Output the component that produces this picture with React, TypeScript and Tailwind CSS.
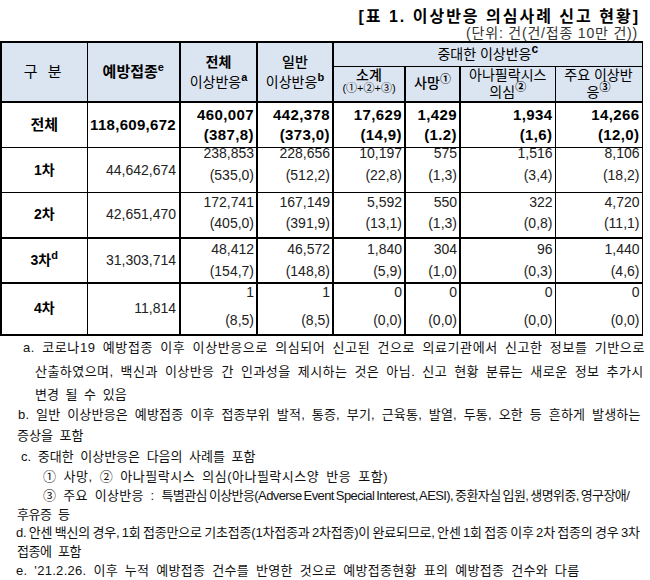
import React from "react";

type Row = {
  label: string;
  sup?: string;
  dose: string;
  bold?: boolean;
  h: string;
  wrap: string;
  cells: [string, string][];
  bottom: string;
};

const ROWS: Row[] = [
  {
    label: "전체",
    dose: "118,609,672",
    bold: true,
    h: "h-[46px]",
    wrap: "leading-[20px]",
    bottom: "border-b",
    cells: [
      ["460,007", "(387,8)"],
      ["442,378", "(373,0)"],
      ["17,629", "(14,9)"],
      ["1,429", "(1.2)"],
      ["1,934", "(1,6)"],
      ["14,266", "(12,0)"],
    ],
  },
  {
    label: "1차",
    dose: "44,642,674",
    h: "h-[45px]",
    wrap: "leading-[22px] -mt-[6px]",
    bottom: "border-b",
    cells: [
      ["238,853", "(535,0)"],
      ["228,656", "(512,2)"],
      ["10,197", "(22,8)"],
      ["575", "(1,3)"],
      ["1,516", "(3,4)"],
      ["8,106", "(18,2)"],
    ],
  },
  {
    label: "2차",
    dose: "42,651,470",
    h: "h-[45px]",
    wrap: "leading-[21px] -mt-[1px]",
    bottom: "border-b-2",
    cells: [
      ["172,741", "(405,0)"],
      ["167,149", "(391,9)"],
      ["5,592", "(13,1)"],
      ["550", "(1,3)"],
      ["322", "(0,8)"],
      ["4,720", "(11,1)"],
    ],
  },
  {
    label: "3차",
    sup: "d",
    dose: "31,303,714",
    h: "h-[45px]",
    wrap: "leading-[22px] -mt-[1px]",
    bottom: "border-b-2",
    cells: [
      ["48,412", "(154,7)"],
      ["46,572", "(148,8)"],
      ["1,840", "(5,9)"],
      ["304", "(1,0)"],
      ["96", "(0,3)"],
      ["1,440", "(4,6)"],
    ],
  },
  {
    label: "4차",
    dose: "11,814",
    h: "h-[46px]",
    wrap: "leading-[28px] -mt-[6px]",
    bottom: "border-b-2",
    cells: [
      ["1", "(8,5)"],
      ["1", "(8,5)"],
      ["0", "(0,0)"],
      ["0", "(0,0)"],
      ["0", "(0,0)"],
      ["0", "(0,0)"],
    ],
  },
];

// right border of data columns 3..8
const COL_R = [
  "border-r-2",
  "border-r-2",
  "border-r-2",
  "border-r-2",
  "border-r",
  "border-r",
];

const NOTES: { text: React.ReactNode; cls: string }[] = [
  { text: "a. 코로나19 예방접종 이후 이상반응으로 의심되어 신고된 건으로 의료기관에서 신고한 정보를 기반으로", cls: "pl-[23px] leading-[24px] tracking-[0.6px]" },
  { text: "산출하였으며, 백신과 이상반응 간 인과성을 제시하는 것은 아님. 신고 현황 분류는 새로운 정보 추가시", cls: "pl-[35px] leading-[24px] tracking-[0.45px]" },
  { text: "변경 될 수 있음", cls: "pl-[35px] leading-[21px]" },
  { text: "b. 일반 이상반응은 예방접종 이후 접종부위 발적, 통증, 부기, 근육통, 발열, 두통, 오한 등 흔하게 발생하는", cls: "pl-[18px] leading-[20px] tracking-[0.2px]" },
  { text: "증상을 포함", cls: "pl-[17px] leading-[22px]" },
  { text: "c. 중대한 이상반응은 다음의 사례를 포함", cls: "pl-[21px] leading-[20px]" },
  { text: "① 사망, ② 아나필락시스 의심(아나필락시스양 반응 포함)", cls: "pl-[43px] leading-[19px] tracking-[0.5px]" },
  {
    text: (
      <>
        ③ 주요 이상반응 :{" "}
        <span className="tracking-[-0.6px] [word-spacing:-1px]">
          특별관심 이상반응(Adverse Event Special Interest, AESI), 중환자실 입원, 생명위중, 영구장애/
        </span>
      </>
    ),
    cls: "pl-[43px] leading-[20px] tracking-[0.3px]",
  },
  { text: "후유증 등", cls: "pl-[17px] leading-[18px] tracking-[-0.4px]" },
  {
    text: "d. 안센 백신의 경우, 1회 접종만으로 기초접종(1차접종과 2차접종)이 완료되므로, 안센 1회 접종 이후 2차 접종의 경우 3차",
    cls: "pl-[16px] leading-[18px] tracking-[-0.2px] [word-spacing:-1px]",
  },
  { text: "접종에 포함", cls: "pl-[17px] leading-[19px] tracking-[-0.4px]" },
  { text: "e. '21.2.26. 이후 누적 예방접종 건수를 반영한 것으로 예방접종현황 표의 예방접종 건수와 다름", cls: "pl-[16px] leading-[19px] tracking-[0.3px]" },
];

export default function App() {
  return (
    <div className="w-[650px] h-[580px] overflow-hidden bg-white text-black font-['Liberation_Sans','Noto_Sans_CJK_KR',sans-serif]">
      {/* Title */}
      <div className="pt-[8px] pr-[10px] text-right text-[16px] font-bold leading-[18px] tracking-[2px]">
        [표 1. 이상반응 의심사례 신고 현황]
      </div>
      <div className="pr-[12px] text-right text-[14px] leading-[14px] tracking-[0.8px] text-[#333]">
        (단위: 건(건/접종 10만 건))
      </div>

      {/* Table */}
      <table className="mt-[1px] table-fixed border-collapse w-[641px] text-[14px]">
        <colgroup>
          <col className="w-[86px]" />
          <col className="w-[93px]" />
          <col className="w-[77px]" />
          <col className="w-[76px]" />
          <col className="w-[72px]" />
          <col className="w-[55px]" />
          <col className="w-[95px]" />
          <col className="w-[87px]" />
        </colgroup>
        <thead className="bg-[#dbe5f1]">
          <tr className="h-[24px]">
            <th rowSpan={2} className="border border-black border-t-2 border-l-2 border-b-2 p-0 text-[15px] font-normal tracking-[3px]">
              구 분
            </th>
            <th rowSpan={2} className="border border-black border-t-2 border-b-2 border-r-2 p-0 text-[15px] font-bold">
              예방접종<sup className="text-[11px] font-bold">e</sup>
            </th>
            <th rowSpan={2} className="border border-black border-t-2 border-b-2 border-r-2 p-0 leading-[20px] font-normal whitespace-nowrap">
              <div className="font-bold">전체</div>
              <div>
                이상반응<sup className="text-[11px] font-bold">a</sup>
              </div>
            </th>
            <th rowSpan={2} className="border border-black border-t-2 border-b-2 border-r-2 p-0 leading-[20px] font-normal whitespace-nowrap">
              <div className="font-medium">일반</div>
              <div>
                이상반응<sup className="text-[11px] font-bold">b</sup>
              </div>
            </th>
            <th colSpan={4} className="border border-black border-t-2 p-0 font-normal">
              중대한 이상반응<sup className="text-[12px] font-bold">c</sup>
            </th>
          </tr>
          <tr className="h-[32px]">
            <th className="border border-black border-b-2 border-r-2 p-0 align-top font-normal whitespace-nowrap">
              <div className="pt-[1px] leading-[14px] font-medium">소계</div>
              <div className="text-[11px] leading-[13px]">(①+②+③)</div>
            </th>
            <th className="border border-black border-b-2 border-r-2 p-0 font-medium whitespace-nowrap">
              사망<sup className="text-[11px] font-bold">①</sup>
            </th>
            <th className="border border-black border-b-2 p-0 align-top font-normal leading-[17px] whitespace-nowrap">
              <div>아나필락시스</div>
              <div>
                의심<sup className="text-[11px] font-bold">②</sup>
              </div>
            </th>
            <th className="border border-black border-b-2 p-0 align-top font-normal leading-[17px] whitespace-nowrap">
              <div>주요 이상반</div>
              <div>
                응<sup className="text-[11px] font-bold">③</sup>
              </div>
            </th>
          </tr>
        </thead>
        <tbody>
          {ROWS.map((r, i) => (
            <tr key={i} className={r.h}>
              <td className={`border border-black border-l-2 ${r.bottom} p-0 text-center font-bold ${r.bold ? "text-[15px]" : "text-[14px]"}`}>
                {r.label}
                {r.sup && <sup className="text-[11px] font-bold">{r.sup}</sup>}
              </td>
              <td
                className={`border border-black border-r-2 ${r.bottom} p-0 pr-[3px] text-right whitespace-nowrap ${
                  r.bold ? "font-bold text-[15px] tracking-[0.3px]" : "text-[#222]"
                }`}
              >
                {r.dose}
              </td>
              {r.cells.map(([n, rate], j) => (
                <td
                  key={j}
                  className={`border border-black ${COL_R[j]} ${r.bottom} p-0 text-right whitespace-nowrap ${
                    r.bold ? "align-middle font-bold text-[15px] tracking-[0.4px]" : "align-top text-[#222]"
                  }`}
                >
                  <div className={`pr-[2px] ${r.wrap}`}>
                    <div>{n}</div>
                    <div>{rate}</div>
                  </div>
                </td>
              ))}
            </tr>
          ))}
        </tbody>
      </table>

      {/* Footnotes */}
      <div className="text-[13px] text-[#111] whitespace-nowrap [word-spacing:3px]">
        {NOTES.map((n, i) => (
          <div key={i} className={n.cls}>
            {n.text}
          </div>
        ))}
      </div>
    </div>
  );
}
